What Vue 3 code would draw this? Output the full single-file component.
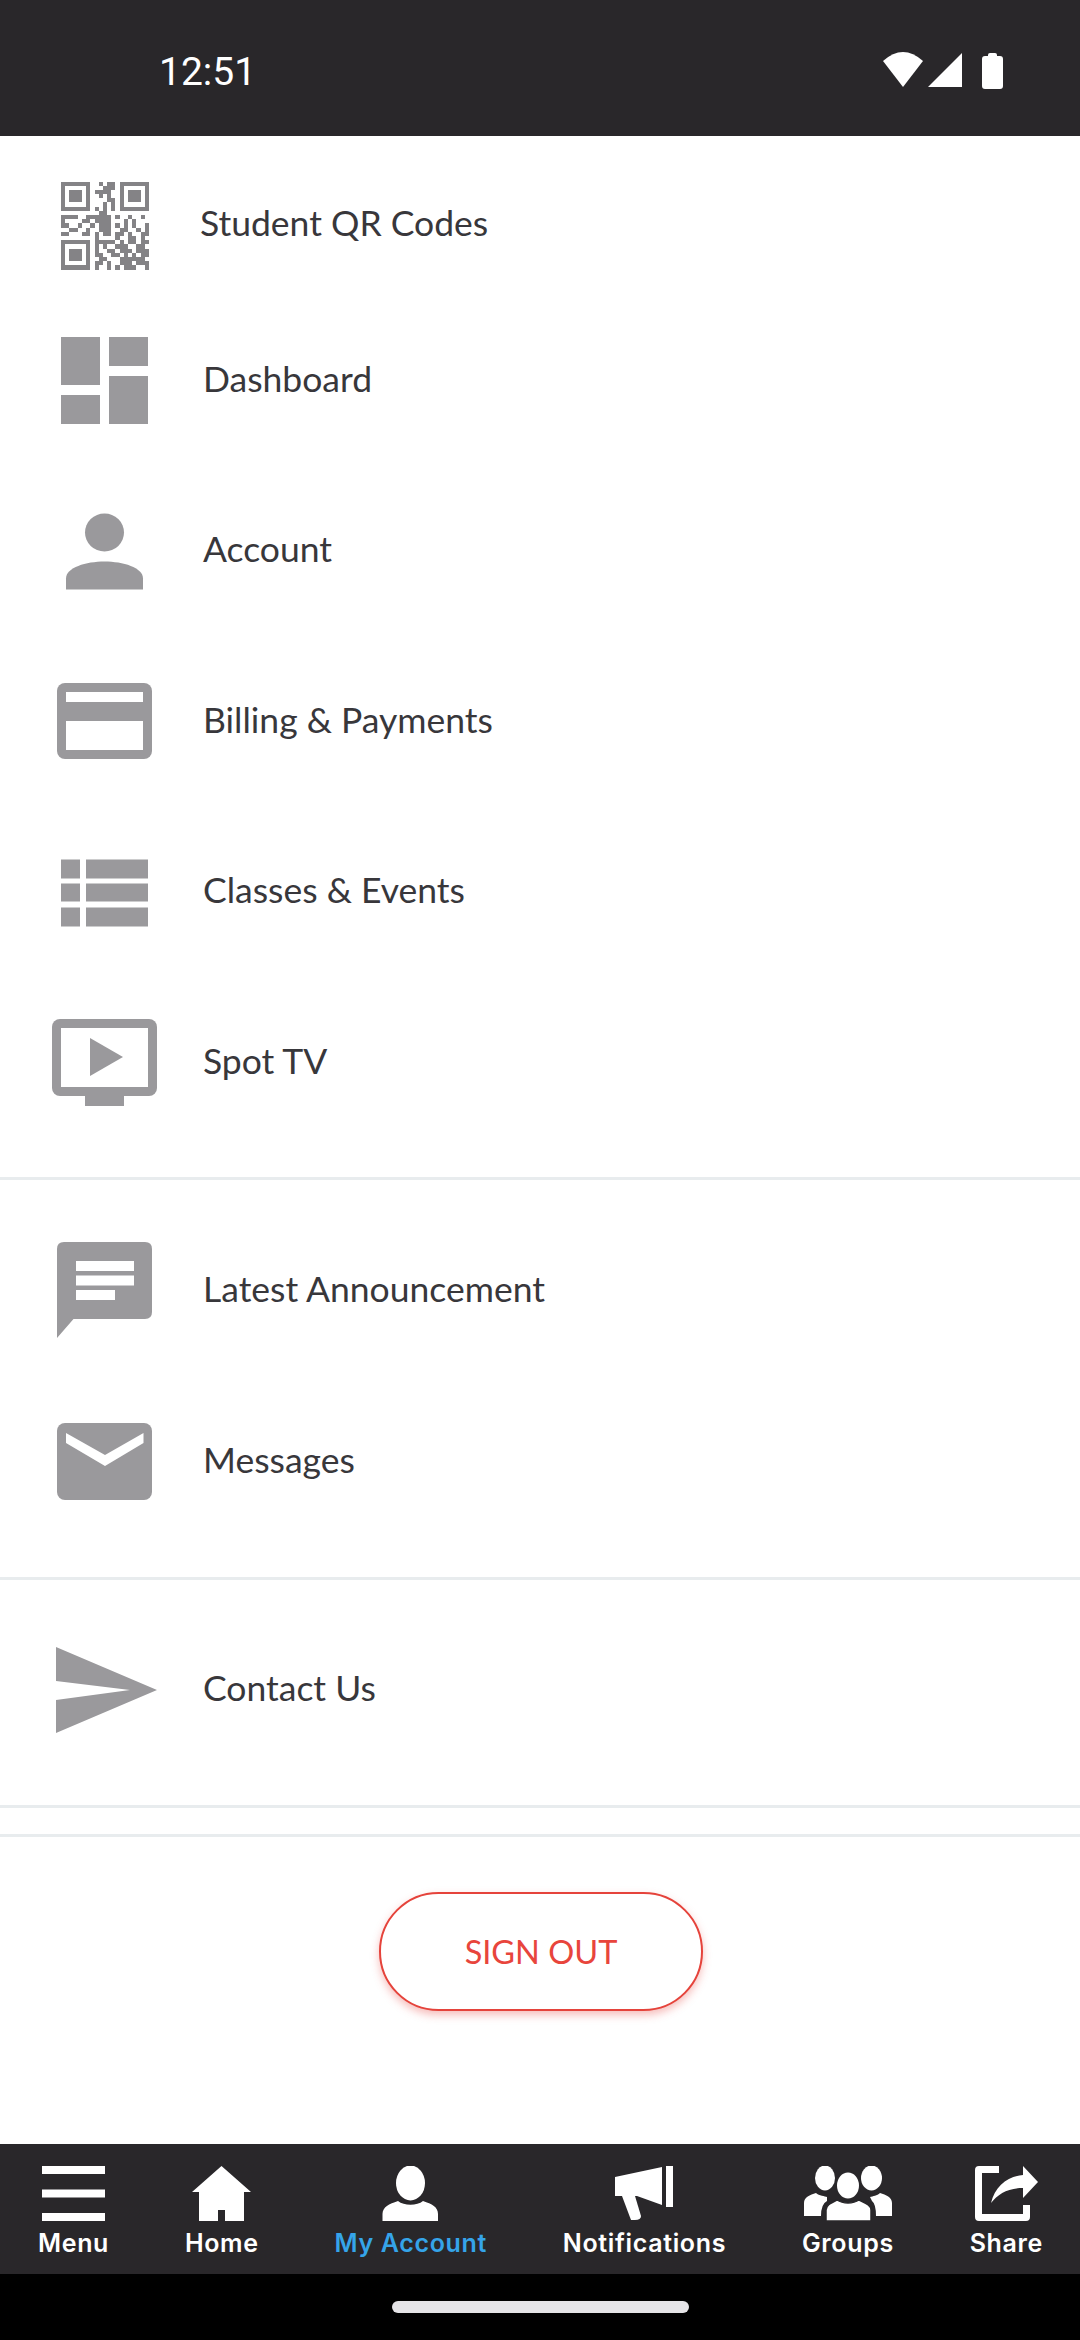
<template>
  <div class="phone">
    <header class="status-bar">
      <span class="clock">12:51</span>
      <svg class="status-icons" viewBox="880 50 126 40" width="126" height="40">
        <path d="M883 61 Q903 43 923 61 L903 87 Z" fill="#fff" />
        <path d="M928 87 L962 53 V87 Z" fill="#fff" />
        <path d="M988 56 V55 Q988 53 990 53 H995 Q997 53 997 55 V56 H1000 Q1003 56 1003 59 V86 Q1003 89 1000 89 H985 Q982 89 982 86 V59 Q982 56 985 56 Z" fill="#fff" />
      </svg>
    </header>

    <main class="content">
      <section v-for="group in menuGroups" :key="group.name" class="menu-group" :class="group.name">
        <a v-for="item in group.items" :key="item.label" class="menu-row" :class="{ 'qr-row': item.icon === 'qr' }">
          <svg class="menu-icon" :viewBox="`52 ${item.top} 106 120`" width="106" height="120">
            <path v-if="item.icon === 'qr'" :d="qrPath" fill="#848386" shape-rendering="crispEdges" />
            <g v-else-if="item.icon === 'dashboard'">
              <rect x="61" y="337" width="39" height="48" />
              <rect x="61" y="395" width="39" height="29" />
              <rect x="109" y="337" width="39" height="29" />
              <rect x="109" y="376" width="39" height="48" />
            </g>
            <g v-else-if="item.icon === 'account'">
              <ellipse cx="104.5" cy="532" rx="19.5" ry="19" />
              <path d="M66 589 V578 C66 567 86 561 104.5 561 S143 567 143 578 V589 Z" />
            </g>
            <g v-else-if="item.icon === 'card'">
              <rect x="57" y="683" width="95" height="76" rx="8" />
              <rect x="66" y="692" width="77" height="10" fill="#fff" />
              <rect x="66" y="721" width="77" height="29" fill="#fff" />
            </g>
            <g v-else-if="item.icon === 'list'">
              <rect x="61" y="859" width="19" height="19" />
              <rect x="86" y="859" width="62" height="19" />
              <rect x="61" y="883" width="19" height="18" />
              <rect x="86" y="883" width="62" height="18" />
              <rect x="61" y="907" width="19" height="19" />
              <rect x="86" y="907" width="62" height="19" />
            </g>
            <g v-else-if="item.icon === 'tv'">
              <rect x="52" y="1019" width="105" height="77" rx="8" />
              <rect x="61" y="1028" width="87" height="59" fill="#fff" />
              <rect x="85" y="1096" width="39" height="10" />
              <path d="M90 1038 L123 1057 L90 1076 Z" />
            </g>
            <g v-else-if="item.icon === 'bubble'">
              <path d="M64 1242 H145 Q152 1242 152 1249 V1312 Q152 1319 145 1319 H73.5 L57 1338 V1249 Q57 1242 64 1242 Z" />
              <rect x="76" y="1261" width="58" height="10" fill="#fff" />
              <rect x="76" y="1275.5" width="58" height="10" fill="#fff" />
              <rect x="76" y="1290" width="39" height="10" fill="#fff" />
            </g>
            <g v-else-if="item.icon === 'mail'">
              <rect x="57" y="1423" width="95" height="77" rx="8" />
              <path d="M66 1433 L105 1455 L143.5 1433 V1443 L105 1466 L66 1443 Z" fill="#fff" />
            </g>
            <path v-else-if="item.icon === 'send'" d="M56 1646 L157 1689 L56 1732 V1699 L130 1689 L56 1680 Z" />
          </svg>
          <span class="menu-label">{{ item.label }}</span>
        </a>
      </section>

      <div class="spacer-group"></div>

      <div class="sign-out-wrap">
        <button class="sign-out">SIGN OUT</button>
      </div>
    </main>

    <nav class="tab-bar">
      <div v-for="tab in tabs" :key="tab.label" class="tab" :class="{ active: tab.active }">
        <svg :viewBox="tab.box" :width="tab.width" height="55" fill="#fff">
          <g v-if="tab.label === 'Menu'">
            <rect x="41" y="2166" width="63" height="8" />
            <rect x="41" y="2189.5" width="63" height="8" />
            <rect x="41" y="2213" width="63" height="8" />
          </g>
          <path v-else-if="tab.label === 'Home'" d="M220.5 2166 L250 2192 H243 V2221 H224 V2210 H217 V2221 H198 V2192 H191 Z" />
          <g v-else-if="tab.label === 'My Account'">
            <ellipse cx="409.5" cy="2183" rx="14.5" ry="17.5" />
            <path d="M381.5 2221 V2214 C381.5 2207 388 2204 397 2201 C403 2206 416 2206 422 2201 C431 2204 437 2207 437 2214 V2221 Z" />
          </g>
          <g v-else-if="tab.label === 'Notifications'">
            <path d="M614 2177 L661 2167 V2205 L636 2196 H614 Z" />
            <path d="M621 2196 H634 L640 2216 Q640 2220 634 2220 H630 Z" />
            <rect x="665" y="2166" width="7" height="41" />
          </g>
          <g v-else-if="tab.label === 'Groups'">
            <ellipse cx="824" cy="2178" rx="10" ry="12.5" />
            <ellipse cx="870.5" cy="2178" rx="10.5" ry="12.5" />
            <path d="M803 2216 V2203 C803 2197 809 2195 815 2193 C818 2196 824 2196 826 2197 L826 2201 Q820 2204 820 2216 Z" />
            <path d="M891 2216 V2203 C891 2197 885 2195 879 2193 C876 2196 872 2196 869 2197 L871 2201 Q875 2204 875 2216 Z" />
            <ellipse cx="847" cy="2185.5" rx="12" ry="14" stroke="#29272a" stroke-width="2" />
            <path d="M825 2221 V2210 C825 2205 830 2203 836 2200 C842 2204 852 2204 858 2200 C864 2203 870 2205 870 2210 V2221 Z" stroke="#29272a" stroke-width="1.5" />
          </g>
          <g v-else-if="tab.label === 'Share'">
            <path d="M999 2166 V2173 H982 V2214 H1023 V2205 H1030 V2217 Q1030 2221 1026 2221 H979 Q975 2221 975 2217 V2170 Q975 2166 979 2166 Z" />
            <path d="M1023 2166 L1038 2182 L1023 2198 V2188 C1008 2188 998 2194 991 2203 C995 2186 1008 2176 1023 2175 Z" />
          </g>
        </svg>
        <span class="tab-label">{{ tab.label }}</span>
      </div>
    </nav>

    <div class="gesture-area">
      <div class="home-indicator"></div>
    </div>
  </div>
</template>

<script setup>
import { computed } from 'vue'

const menuGroups = [
  {
    name: 'account-group',
    items: [
      { label: 'Student QR Codes', icon: 'qr', top: 162.5 },
      { label: 'Dashboard', icon: 'dashboard', top: 318 },
      { label: 'Account', icon: 'account', top: 488.5 },
      { label: 'Billing & Payments', icon: 'card', top: 659 },
      { label: 'Classes & Events', icon: 'list', top: 829.5 },
      { label: 'Spot TV', icon: 'tv', top: 1000 }
    ]
  },
  {
    name: 'inbox-group',
    items: [
      { label: 'Latest Announcement', icon: 'bubble', top: 1229 },
      { label: 'Messages', icon: 'mail', top: 1399 }
    ]
  },
  {
    name: 'contact-group',
    items: [{ label: 'Contact Us', icon: 'send', top: 1627 }]
  }
]

const tabs = [
  { label: 'Menu', box: '41 2166 63 55', width: 63 },
  { label: 'Home', box: '191 2166 59 55', width: 59 },
  { label: 'My Account', box: '381 2166 57 55', width: 57, active: true },
  { label: 'Notifications', box: '614 2166 58 55', width: 58 },
  { label: 'Groups', box: '803 2166 88 55', width: 88 },
  { label: 'Share', box: '975 2166 63 55', width: 63 }
]

// 21x21 modules, same look as the printed code
const qrRows = [
  '111111100101101111111',
  '100000100011101000001',
  '101110101111001011101',
  '101110100101001011101',
  '101110100001101011101',
  '100000100010101000001',
  '111111101010101111111',
  '000000000110000000000',
  '111100111111010010010',
  '100001101111000101000',
  '110010010111010101001',
  '001100100111001100101',
  '110001101011011010011',
  '000000001000010011010',
  '111111101111101011011',
  '100000101010011100110',
  '101110101001101110111',
  '101110101100110101011',
  '101110100110001111110',
  '100000101101001110111',
  '111111101001010111001'
]

const qrPath = computed(() => {
  const size = 88 / 21
  let d = ''
  qrRows.forEach((row, r) => {
    ;[...row].forEach((cell, c) => {
      if (cell === '1') d += `M${61 + c * size} ${181 + r * size}h${size}v${size}h${-size}z`
    })
  })
  return d
})
</script>

<style>
html,
body {
  margin: 0;
  background: #fff;
}
</style>

<style scoped>
.phone {
  width: 1080px;
  height: 2340px;
  display: flex;
  flex-direction: column;
  overflow: hidden;
  background: #fff;
  font-family: Lato, "Liberation Sans", sans-serif;
}

/* Status bar */
.status-bar {
  height: 136px;
  flex: none;
  box-sizing: border-box;
  display: flex;
  align-items: center;
  justify-content: space-between;
  padding: 0 74px 0 159px;
  background: #29272a;
  color: #fff;
}
.clock {
  font-family: Roboto, sans-serif;
  font-size: 39px;
  line-height: 44px;
  margin-top: 8px;
}
.status-icons {
  display: block;
  margin-top: 4px;
}

/* Menu */
.content {
  flex: 1;
  display: flex;
  flex-direction: column;
}
.menu-group {
  border-bottom: 3px solid #e8ecee;
  padding-bottom: 32px;
}
.account-group {
  padding-top: 16px;
  padding-bottom: 31px;
}
.inbox-group {
  padding-top: 24px;
}
.contact-group {
  padding-top: 23px;
}
.menu-row {
  height: 170.5px;
  display: flex;
  align-items: center;
  padding-left: 52px;
}
.qr-row {
  height: 141px;
}
.menu-icon {
  flex: none;
  display: block;
  margin-right: 45px;
  fill: #9a999c;
}
.qr-row .menu-icon {
  margin-right: 42px;
}
.menu-label {
  font-size: 35.5px;
  color: #38373b;
}

.spacer-group {
  height: 26px;
  border-bottom: 3px solid #e8ecee;
}
.sign-out-wrap {
  display: flex;
  justify-content: center;
  padding: 55px 0 0 2px;
}
.sign-out {
  width: 324px;
  height: 119px;
  box-sizing: border-box;
  border: 2px solid #e5433b;
  border-radius: 60px;
  background: #fff;
  box-shadow: 0 4px 8px rgba(229, 67, 59, 0.35);
  color: #e8453c;
  font-family: Lato, sans-serif;
  font-size: 32.5px;
}

/* Bottom tabs */
.tab-bar {
  flex: none;
  height: 130px;
  box-sizing: border-box;
  display: flex;
  justify-content: space-between;
  padding: 22px 37px 0 38px;
  background: #29272a;
  font-family: Inter, "Liberation Sans", sans-serif;
}
.tab {
  display: flex;
  flex-direction: column;
  align-items: center;
}
.tab svg {
  display: block;
  flex: none;
}
.tab-label {
  margin-top: 7px;
  font-size: 25px;
  line-height: 30px;
  font-weight: 600;
  letter-spacing: 0.65px;
  color: #fff;
  white-space: nowrap;
}
.tab.active .tab-label {
  color: #35a4e9;
}

.gesture-area {
  flex: none;
  height: 66px;
  display: flex;
  justify-content: center;
  padding-top: 27px;
  box-sizing: border-box;
  background: #000;
}
.home-indicator {
  width: 297px;
  height: 12px;
  border-radius: 6px;
  background: #e5e4e7;
}
</style>
